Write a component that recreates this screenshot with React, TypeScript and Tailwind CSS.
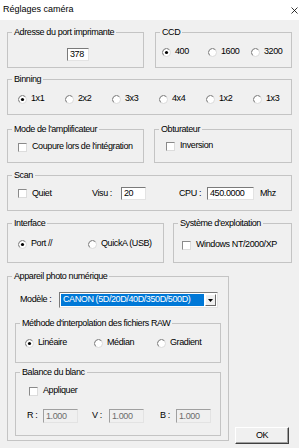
import type { ReactNode } from 'react';

// Classic Win32 "Réglages caméra" dialog

function Group({ label, className = '', children }: { label: string; className?: string; children?: ReactNode }) {
  return (
    <div className={`border border-[#c4c4c4] ${className}`}>
      <div className="-mt-[6px] ml-[4px] w-fit whitespace-nowrap bg-[#f0f0f0] px-[2px] leading-[11px]">{label}</div>
      {children}
    </div>
  );
}

function Radio({ label, checked = false }: { label: string; checked?: boolean }) {
  return (
    <div className="flex h-[12px] items-center gap-[4px]">
      <svg width="9" height="9" viewBox="0 0 9 9" className="shrink-0">
        <circle cx="4.5" cy="4.5" r="4" fill="#fff" stroke="#dadada" />
        <path d="M1.67 7.33 A4 4 0 0 1 7.33 1.67" stroke="#808080" fill="none" />
        {checked && <circle cx="4.5" cy="4.5" r="1.6" fill="#000" />}
      </svg>
      <span className="whitespace-nowrap">{label}</span>
    </div>
  );
}

function Check({ label }: { label: string }) {
  return (
    <div className="flex h-[12px] items-center gap-[5px]">
      <span className="h-[9px] w-[9px] shrink-0 border border-t-[#8a8a8a] border-l-[#8a8a8a] border-r-[#dcdcdc] border-b-[#dcdcdc] bg-white" />
      <span className="whitespace-nowrap">{label}</span>
    </div>
  );
}

function Field({ value, className = '', disabled = false }: { value: string; className?: string; disabled?: boolean }) {
  return (
    <div
      className={`flex items-center border pl-[2px] leading-none ${
        disabled
          ? 'border-t-[#a0a0a0] border-l-[#a0a0a0] border-r-[#e3e3e3] border-b-[#e3e3e3] bg-[#f0f0f0] text-[#6d6d6d]'
          : 'border-t-[#7a7a7a] border-l-[#7a7a7a] border-r-[#e3e3e3] border-b-[#e3e3e3] bg-white'
      } ${className}`}
    >
      {value}
    </div>
  );
}

export default function App() {
  return (
    <div className="flex h-[448px] w-[299px] flex-col overflow-hidden bg-[#f0f0f0] font-['Liberation_Sans',Arial,sans-serif] text-[9px] tracking-[-0.4px] text-black">
      <div className="flex h-[20px] shrink-0 items-center justify-between bg-white pl-[3px] pr-[1px] text-[9px] tracking-normal">
        <span>Réglages caméra</span>
        <svg width="7" height="7" viewBox="0 0 7 7">
          <path d="M0.5 0.5 L6.5 6.5 M6.5 0.5 L0.5 6.5" stroke="#000" strokeWidth="0.8" />
        </svg>
      </div>

      <div className="flex flex-col px-[7px] pt-[12px]">
        <div className="flex gap-[11px]">
          <Group label="Adresse du port imprimante" className="h-[36px] w-[137px]">
            <Field value="378" className="ml-[59px] mt-[10px] h-[13px] w-[22px]" />
          </Group>
          <Group label="CCD" className="h-[36px] w-[137px]">
            <div className="mt-[8px] grid grid-cols-[46px_43px_auto] pl-[6px]">
              <Radio label="400" checked />
              <Radio label="1600" />
              <Radio label="3200" />
            </div>
          </Group>
        </div>

        <Group label="Binning" className="mt-[11px] h-[36px]">
          <div className="mt-[8px] grid grid-cols-[repeat(6,47px)] pl-[10px]">
            <Radio label="1x1" checked />
            <Radio label="2x2" />
            <Radio label="3x3" />
            <Radio label="4x4" />
            <Radio label="1x2" />
            <Radio label="1x3" />
          </div>
        </Group>

        <div className="mt-[14px] flex gap-[10px]">
          <Group label="Mode de l'amplificateur" className="h-[34px] w-[137px]">
            <div className="mt-[6px] pl-[10px]">
              <Check label="Coupure lors de l'intégration" />
            </div>
          </Group>
          <Group label="Obturateur" className="h-[34px] flex-1">
            <div className="mt-[5px] pl-[11px]">
              <Check label="Inversion" />
            </div>
          </Group>
        </div>

        <Group label="Scan" className="mt-[12px] h-[36px]">
          <div className="mt-[6px] flex h-[13px] items-center pl-[10px]">
            <div className="w-[74px]">
              <Check label="Quiet" />
            </div>
            <span className="w-[29px]">Visu :</span>
            <Field value="20" className="h-[13px] w-[25px]" />
            <span className="ml-[33px] w-[28px]">CPU :</span>
            <Field value="450.0000" className="h-[13px] w-[47px]" />
            <span className="ml-[6px]">Mhz</span>
          </div>
        </Group>

        <div className="mt-[12px] flex gap-[9px]">
          <Group label="Interface" className="h-[40px] w-[157px]">
            <div className="mt-[9px] grid grid-cols-[70px_auto] pl-[10px]">
              <Radio label="Port //" checked />
              <Radio label="QuickA (USB)" />
            </div>
          </Group>
          <Group label="Système d'exploitation" className="h-[40px] flex-1">
            <div className="mt-[10px] pl-[8px]">
              <Check label="Windows NT/2000/XP" />
            </div>
          </Group>
        </div>

        <div className="mt-[13px] flex items-start">
          <Group label="Appareil photo numérique" className="h-[165px] w-[222px]">
            <div className="mt-[10px] flex h-[16px] items-center pl-[12px]">
              <span className="w-[39px]">Modèle :</span>
              <div className="flex h-[16px] w-[159px] items-center border border-t-[#7a7a7a] border-l-[#7a7a7a] border-r-[#e3e3e3] border-b-[#e3e3e3] bg-white p-[1px]">
                <div className="flex h-full min-w-0 flex-1 items-center overflow-hidden whitespace-nowrap bg-[#0078d7] pl-[2px] text-white">
                  CANON (5D/20D/40D/350D/500D)
                </div>
                <div className="ml-[1px] flex h-full w-[11px] shrink-0 items-center justify-center border border-t-white border-l-white border-r-[#696969] border-b-[#696969] bg-[#f0f0f0]">
                  <svg width="5" height="3" viewBox="0 0 5 3">
                    <path d="M0 0 H5 L2.5 3 Z" fill="#000" />
                  </svg>
                </div>
              </div>
            </div>

            <Group label="Méthode d'interpolation des fichiers RAW" className="ml-[7px] mt-[15px] h-[40px] w-[206px]">
              <div className="mt-[8px] grid grid-cols-[69px_63px_auto] pl-[9px]">
                <Radio label="Linéaire" checked />
                <Radio label="Médian" />
                <Radio label="Gradient" />
              </div>
            </Group>

            <Group label="Balance du blanc" className="ml-[7px] mt-[9px] h-[64px] w-[206px]">
              <div className="mt-[7px] pl-[13px]">
                <Check label="Appliquer" />
              </div>
              <div className="mt-[12px] flex h-[14px] items-center pl-[11px]">
                <span className="w-[16px]">R :</span>
                <Field value="1.000" disabled className="h-[14px] w-[35px]" />
                <span className="ml-[14px] w-[17px]">V :</span>
                <Field value="1.000" disabled className="h-[14px] w-[35px]" />
                <span className="ml-[16px] w-[16px]">B :</span>
                <Field value="1.000" disabled className="h-[14px] w-[35px]" />
              </div>
            </Group>
          </Group>

          <button className="ml-[6px] mt-[151px] flex h-[17px] w-[54px] items-center justify-center border border-t-white border-l-white border-r-[#404040] border-b-[#404040] bg-[#f0f0f0] shadow-[inset_-1px_-1px_0_#a0a0a0]">
            OK
          </button>
        </div>
      </div>
    </div>
  );
}
